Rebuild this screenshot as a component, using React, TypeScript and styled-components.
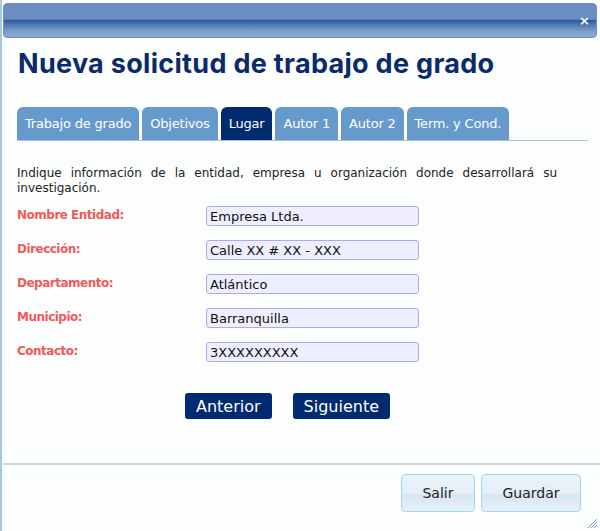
import React from 'react';
import styled, { createGlobalStyle } from 'styled-components';

const GlobalStyle = createGlobalStyle`
  html, body {
    margin: 0;
    padding: 0;
    background: #fcfdfd;
  }
  * {
    box-sizing: border-box;
  }
`;

const Dialog = styled.div`
  display: flex;
  flex-direction: column;
  width: 600px;
  height: 531px;
  border-left: 2px solid #a6c9e2;
  background: #fcfdfd;
  font-family: 'DejaVu Sans', Verdana, sans-serif;
  position: relative;
`;

const TitleBar = styled.div`
  display: flex;
  align-items: center;
  justify-content: flex-end;
  height: 35px;
  margin: 3px 3px 0 1px;
  padding-right: 6px;
  border: 1px solid #6a90c4;
  border-radius: 4px;
  background: linear-gradient(
    to bottom,
    #6a8ec1 0%,
    #6a8ec1 46%,
    #2c5a9c 50%,
    #4f78b2 62%,
    #7b9ccb 82%,
    #8eaad3 100%
  );
`;

const Close = styled.span`
  color: #ffffff;
  font-size: 13px;
  font-weight: bold;
  line-height: 1;
`;

const Body = styled.div`
  flex: 1;
  padding: 0 12px 0 15px;
`;

const Heading = styled.h1`
  margin: 9px 0 0 1px;
  font-family: Inter, 'Open Sans', sans-serif;
  font-size: 27px;
  font-weight: 700;
  color: #0b2a6b;
  letter-spacing: 0.3px;
`;

const TabList = styled.div`
  display: flex;
  gap: 3px;
  margin-top: 27px;
  border-bottom: 1px solid #a9c3df;
`;

const Tab = styled.div<{ $active?: boolean }>`
  height: 33px;
  padding: 0 8px;
  display: flex;
  align-items: center;
  border-radius: 6px 6px 0 0;
  background: ${(p) => (p.$active ? '#002b70' : '#6699cc')};
  color: #ffffff;
  font-size: 13px;
  letter-spacing: -0.2px;
`;

const Intro = styled.p`
  margin: 25px 31px 0 0;
  font-size: 12px;
  line-height: 15px;
  color: #222222;
  text-align: justify;
`;

const Form = styled.div`
  display: grid;
  grid-template-columns: 189px 213px;
  row-gap: 14px;
  margin-top: 10px;
`;

const Label = styled.label`
  padding-top: 2px;
  font-size: 12px;
  font-weight: bold;
  letter-spacing: -0.5px;
  color: #f05a5a;
`;

const Input = styled.div`
  height: 20px;
  padding: 0 3px;
  display: flex;
  align-items: center;
  border: 1px solid #aaaaee;
  border-radius: 3px;
  background: #eeeeff;
  color: #111111;
  font-size: 13px;
`;

const NavRow = styled.div`
  display: flex;
  justify-content: center;
  gap: 21px;
  margin: 31px 0 0 -30px;
`;

const NavButton = styled.button`
  height: 26px;
  padding: 0 11px;
  border: none;
  border-radius: 3px;
  background: #002b70;
  color: #ffffff;
  font-family: 'DejaVu Sans', Verdana, sans-serif;
  font-size: 16px;
`;

const Footer = styled.div`
  display: flex;
  justify-content: flex-end;
  gap: 6px;
  height: 68px;
  padding: 9px 19px 0 0;
  border-top: 2px solid #c5dbec;
  margin-left: 1px;
`;

const FooterButton = styled.button<{ $width: number }>`
  width: ${(p) => p.$width}px;
  height: 38px;
  border: 1px solid #9fd7f4;
  border-radius: 4px;
  background: linear-gradient(to bottom, #eaf3fa 0%, #e3eef7 50%, #d7e6f2 55%, #e6f0f8 100%);
  color: #222222;
  font-family: 'DejaVu Sans', Verdana, sans-serif;
  font-size: 14px;
`;

const Grip = styled.svg`
  position: absolute;
  right: 2px;
  bottom: 2px;
`;

const tabs = ['Trabajo de grado', 'Objetivos', 'Lugar', 'Autor 1', 'Autor 2', 'Term. y Cond.'];

const fields = [
  ['Nombre Entidad:', 'Empresa Ltda.'],
  ['Dirección:', 'Calle XX # XX - XXX'],
  ['Departamento:', 'Atlántico'],
  ['Municipio:', 'Barranquilla'],
  ['Contacto:', '3XXXXXXXXX'],
];

const App: React.FC = () => {
  return (
    <>
      <GlobalStyle />
      <Dialog>
        <TitleBar>
          <Close>×</Close>
        </TitleBar>
        <Body>
          <Heading>Nueva solicitud de trabajo de grado</Heading>
          <TabList>
            {tabs.map((t) => (
              <Tab key={t} $active={t === 'Lugar'}>
                {t}
              </Tab>
            ))}
          </TabList>
          <Intro>
            Indique información de la entidad, empresa u organización donde desarrollará su
            investigación.
          </Intro>
          <Form>
            {fields.map(([label, value]) => (
              <React.Fragment key={label}>
                <Label>{label}</Label>
                <Input>{value}</Input>
              </React.Fragment>
            ))}
          </Form>
          <NavRow>
            <NavButton>Anterior</NavButton>
            <NavButton>Siguiente</NavButton>
          </NavRow>
        </Body>
        <Footer>
          <FooterButton $width={74}>Salir</FooterButton>
          <FooterButton $width={100}>Guardar</FooterButton>
        </Footer>
        <Grip width="10" height="10" viewBox="0 0 10 10">
          <path d="M9 3L3 9M9 6L6 9M9 0L0 9" stroke="#6fa3d0" strokeWidth="1" />
        </Grip>
      </Dialog>
    </>
  );
};

export default App;
